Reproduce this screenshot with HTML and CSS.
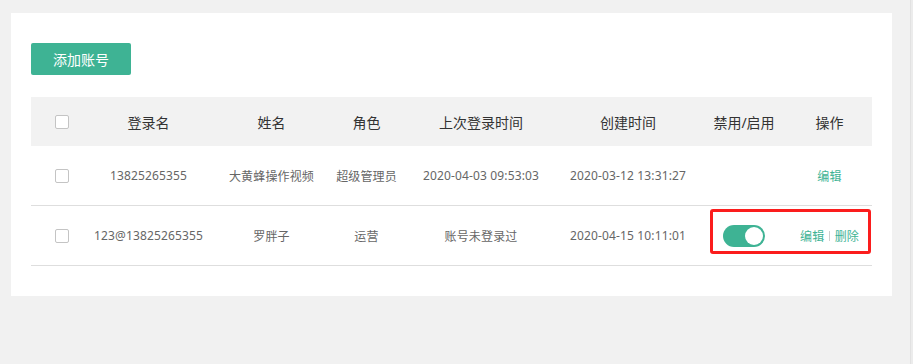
FILE: index.html
```html
<!DOCTYPE html>
<html lang="zh-CN">
<head>
<meta charset="utf-8">
<title>账号管理</title>
<link rel="stylesheet" href="styles.css">
</head>
<body>
<div class="page">
  <div class="card">
    <button class="btn-add" type="button">添加账号</button>
    <div class="table">
      <div class="row head">
        <div class="cell"><span class="checkbox"></span></div>
        <div class="cell">登录名</div>
        <div class="cell">姓名</div>
        <div class="cell">角色</div>
        <div class="cell">上次登录时间</div>
        <div class="cell">创建时间</div>
        <div class="cell">禁用/启用</div>
        <div class="cell">操作</div>
      </div>
      <div class="row body">
        <div class="cell"><span class="checkbox"></span></div>
        <div class="cell">13825265355</div>
        <div class="cell">大黄蜂操作视频</div>
        <div class="cell">超级管理员</div>
        <div class="cell">2020-04-03 09:53:03</div>
        <div class="cell">2020-03-12 13:31:27</div>
        <div class="cell"></div>
        <div class="cell"><a class="link">编辑</a></div>
      </div>
      <div class="row body">
        <div class="cell"><span class="checkbox"></span></div>
        <div class="cell">123@13825265355</div>
        <div class="cell">罗胖子</div>
        <div class="cell">运营</div>
        <div class="cell">账号未登录过</div>
        <div class="cell">2020-04-15 10:11:01</div>
        <div class="cell"><span class="switch on"><span class="knob"></span></span></div>
        <div class="cell"><a class="link">编辑</a><span class="sep"></span><a class="link">删除</a></div>
        <div class="highlight"></div>
      </div>
    </div>
  </div>
</div>
<div class="scrollbar"></div>
</body>
</html>
```
FILE: styles.css
```css
html, body {
  margin: 0;
  padding: 0;
}
body {
  background: #f1f1f1;
  font-family: "Noto Sans", "Noto Sans CJK SC", sans-serif;
  display: flex;
  height: 364px;
  overflow: hidden;
}
.page {
  flex: 1;
  padding: 13px 0 0 11px;
}
.scrollbar {
  width: 2px;
  border-left: 1px solid #e2e2e2;
  background: #ececec;
}
.card {
  width: 841px;
  height: 223px;
  background: #fff;
  padding: 30px 20px 30px 20px;
}
.btn-add {
  display: block;
  width: 100px;
  height: 32px;
  border: none;
  border-radius: 2px;
  background: #3eb394;
  color: #fff;
  font-family: inherit;
  font-size: 14px;
  padding: 0;
  cursor: pointer;
}
.table {
  margin-top: 22px;
}
.row {
  display: grid;
  grid-template-columns: 62px 111px 135px 55px 174px 120px 112px 59px;
  padding-right: 13px;
  position: relative;
}
.row.head {
  height: 49px;
  background: #f2f2f2;
  color: #333;
  font-size: 14px;
}
.row.body {
  height: 60px;
  box-sizing: border-box;
  border-bottom: 1px solid #dedede;
  color: #666;
  font-size: 12px;
  letter-spacing: 0.15px;
}
.cell {
  display: flex;
  align-items: center;
  justify-content: center;
  white-space: nowrap;
}
.checkbox {
  width: 12px;
  height: 12px;
  border: 1px solid #c4c4c4;
  border-radius: 2px;
  background: #fff;
}
.link {
  color: #3eb394;
  cursor: pointer;
}
.sep {
  display: inline-block;
  width: 1px;
  height: 10px;
  background: #cfcfcf;
  margin: 0 5px;
}
.switch {
  width: 42px;
  height: 22px;
  border-radius: 11px;
  background: #3eb394;
  display: flex;
  align-items: center;
  justify-content: flex-end;
  padding: 0 2px;
  box-sizing: border-box;
}
.knob {
  width: 18px;
  height: 18px;
  border-radius: 50%;
  background: #fff;
}
.highlight {
  position: absolute;
  left: 679px;
  top: 3px;
  width: 155px;
  height: 39px;
  border: 3px solid #fb1d1d;
  border-radius: 3px;
}
```
